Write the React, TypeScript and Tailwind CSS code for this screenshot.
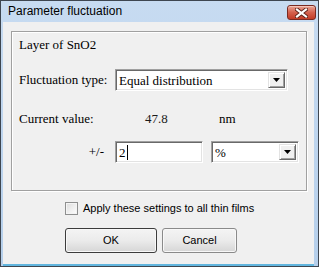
const serif = { fontFamily: '"Liberation Serif", "Times New Roman", serif' }
const sans = { fontFamily: '"Liberation Sans", Arial, sans-serif' }

function DropArrow() {
  return (
    <div className="flex h-full w-[17px] items-center justify-center border border-t-[#e3e3e3] border-l-[#e3e3e3] border-b-[#696969] border-r-[#696969] bg-[#f0f0f0] shadow-[inset_1px_1px_0_#ffffff,inset_-1px_-1px_0_#a0a0a0]">
      <svg width="7" height="4" viewBox="0 0 7 4">
        <path d="M0 0h7L3.5 4z" fill="#000" />
      </svg>
    </div>
  )
}

function Sunken({ width, children }: { width: string; children: React.ReactNode }) {
  return (
    <div
      className={`flex h-[22px] items-stretch border border-t-[#a0a0a0] border-l-[#a0a0a0] border-b-white border-r-white bg-white shadow-[inset_1px_1px_0_#696969,inset_-1px_-1px_0_#e3e3e3] ${width}`}
    >
      {children}
    </div>
  )
}

function Combo({ value, width }: { value: string; width: string }) {
  return (
    <Sunken width={width}>
      <div className="flex flex-1 items-center pl-[3px] pt-[1px] text-[13px] leading-none text-black" style={serif}>
        {value}
      </div>
      <div className="py-[2px] pr-[2px]">
        <DropArrow />
      </div>
    </Sunken>
  )
}

export default function App() {
  return (
    <div className="flex h-[267px] w-[319px] flex-col border border-[#3e4650] bg-gradient-to-b from-[#c7dbf1] to-[#b5cfeb]">
      {/* title bar */}
      <div className="flex h-[21px] shrink-0 items-start">
        <span className="ml-[7px] mt-[3px] text-[12px] leading-[15px] text-black" style={sans}>
          Parameter fluctuation
        </span>
        <div className="ml-auto mr-[2px] mt-[4px] flex h-[15px] w-[29px] items-center justify-center rounded-[3px] border border-[#7a2a22] bg-gradient-to-b from-[#e8a496] via-[#d4604d] to-[#c23a25] shadow-[inset_0_1px_0_#f3c5bb]">
          <svg width="13" height="10" viewBox="0 0 13 10">
            <path d="M2 1.5L11 8.5M11 1.5L2 8.5" stroke="#5a2018" strokeWidth="4" strokeLinecap="square" />
            <path d="M2 1.5L11 8.5M11 1.5L2 8.5" stroke="#ffffff" strokeWidth="2.2" strokeLinecap="square" />
          </svg>
        </div>
      </div>

      {/* client area */}
      <div className="ml-[2px] mr-[4px] mb-[2px] flex flex-1 flex-col bg-[#f0f0f0] shadow-[0_2px_0_#62b6df]">
        {/* group box */}
        <div
          className="ml-[8px] mt-[9px] flex h-[160px] w-[296px] flex-col border border-[#a0a0a0] pl-[7px] pt-[5px] text-[13px] text-black shadow-[inset_1px_1px_0_#ffffff,1px_1px_0_#ffffff]"
          style={serif}
        >
          <div className="h-[16px] leading-[16px]">Layer of SnO2</div>

          <div className="mt-[16px] flex h-[22px] items-center">
            <span className="w-[96px] leading-[16px]">Fluctuation type:</span>
            <Combo value="Equal distribution" width="w-[173px]" />
          </div>

          <div className="mt-[20px] flex h-[16px] items-center leading-[16px]">
            <span className="w-[126px]">Current value:</span>
            <span className="w-[74px] text-[#1a1a1a]">47.8</span>
            <span>nm</span>
          </div>

          <div className="mt-[14px] flex h-[22px] items-center">
            <span className="w-[85px] text-right leading-[16px]">+/-</span>
            <span className="w-[11px]" />
            <Sunken width="w-[88px]">
              <div className="flex items-center pl-[3px] pt-[1px] leading-none">
                2<span className="ml-[1px] inline-block h-[15px] w-px bg-black" />
              </div>
            </Sunken>
            <div className="w-[8px]" />
            <Combo value="%" width="w-[88px]" />
          </div>
        </div>

        {/* checkbox */}
        <label className="ml-[62px] mt-[11px] flex items-center gap-[5px] text-[11px] text-black" style={sans}>
          <span className="h-[13px] w-[13px] border border-[#8e8f8f] bg-gradient-to-br from-[#dcdcdc] to-[#ffffff] shadow-[inset_0_0_0_1px_#f4f4f4]" />
          <span className="leading-[13px]">Apply these settings to all thin films</span>
        </label>

        {/* buttons */}
        <div className="ml-[62px] mt-[13px] flex gap-[5px] text-[11px] text-black" style={sans}>
          <button className="flex h-[25px] w-[92px] items-center justify-center rounded-[3px] border border-[#3c3c3c] bg-gradient-to-b from-[#f4f4f4] via-[#ebebeb] to-[#d6d6d6] shadow-[inset_0_0_0_1px_#f8f8f8]">
            OK
          </button>
          <button className="flex h-[25px] w-[75px] items-center justify-center rounded-[3px] border border-[#8a8a8a] bg-gradient-to-b from-[#f4f4f4] via-[#ebebeb] to-[#d6d6d6] shadow-[inset_0_0_0_1px_#f8f8f8]">
            Cancel
          </button>
        </div>
      </div>
    </div>
  )
}
